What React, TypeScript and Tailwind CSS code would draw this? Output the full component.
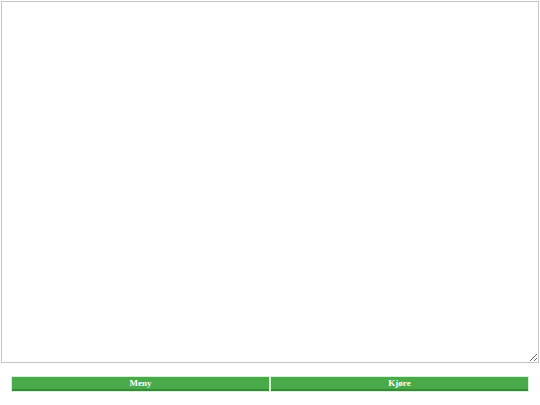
export default function App() {
  return (
    <div className="w-[540px] h-[405px] bg-white">
      <textarea className="block m-px w-[538px] h-[362px] border border-[#c4c4c4] bg-white resize outline-none" />
      <div className="flex ml-[11px] mt-[13px] w-[518px]">
        <button className="flex-1 h-[16px] pb-[2px] border border-[#d4f2d4] bg-[#49aa49] shadow-[inset_0_-2px_0_#378a37] text-white text-[9px] font-bold leading-none font-['Liberation_Serif',serif]">
          Meny
        </button>
        <button className="flex-1 h-[16px] pb-[2px] border border-[#d4f2d4] bg-[#49aa49] shadow-[inset_0_-2px_0_#378a37] text-white text-[9px] font-bold leading-none font-['Liberation_Serif',serif]">
          Kjøre
        </button>
      </div>
    </div>
  );
}
